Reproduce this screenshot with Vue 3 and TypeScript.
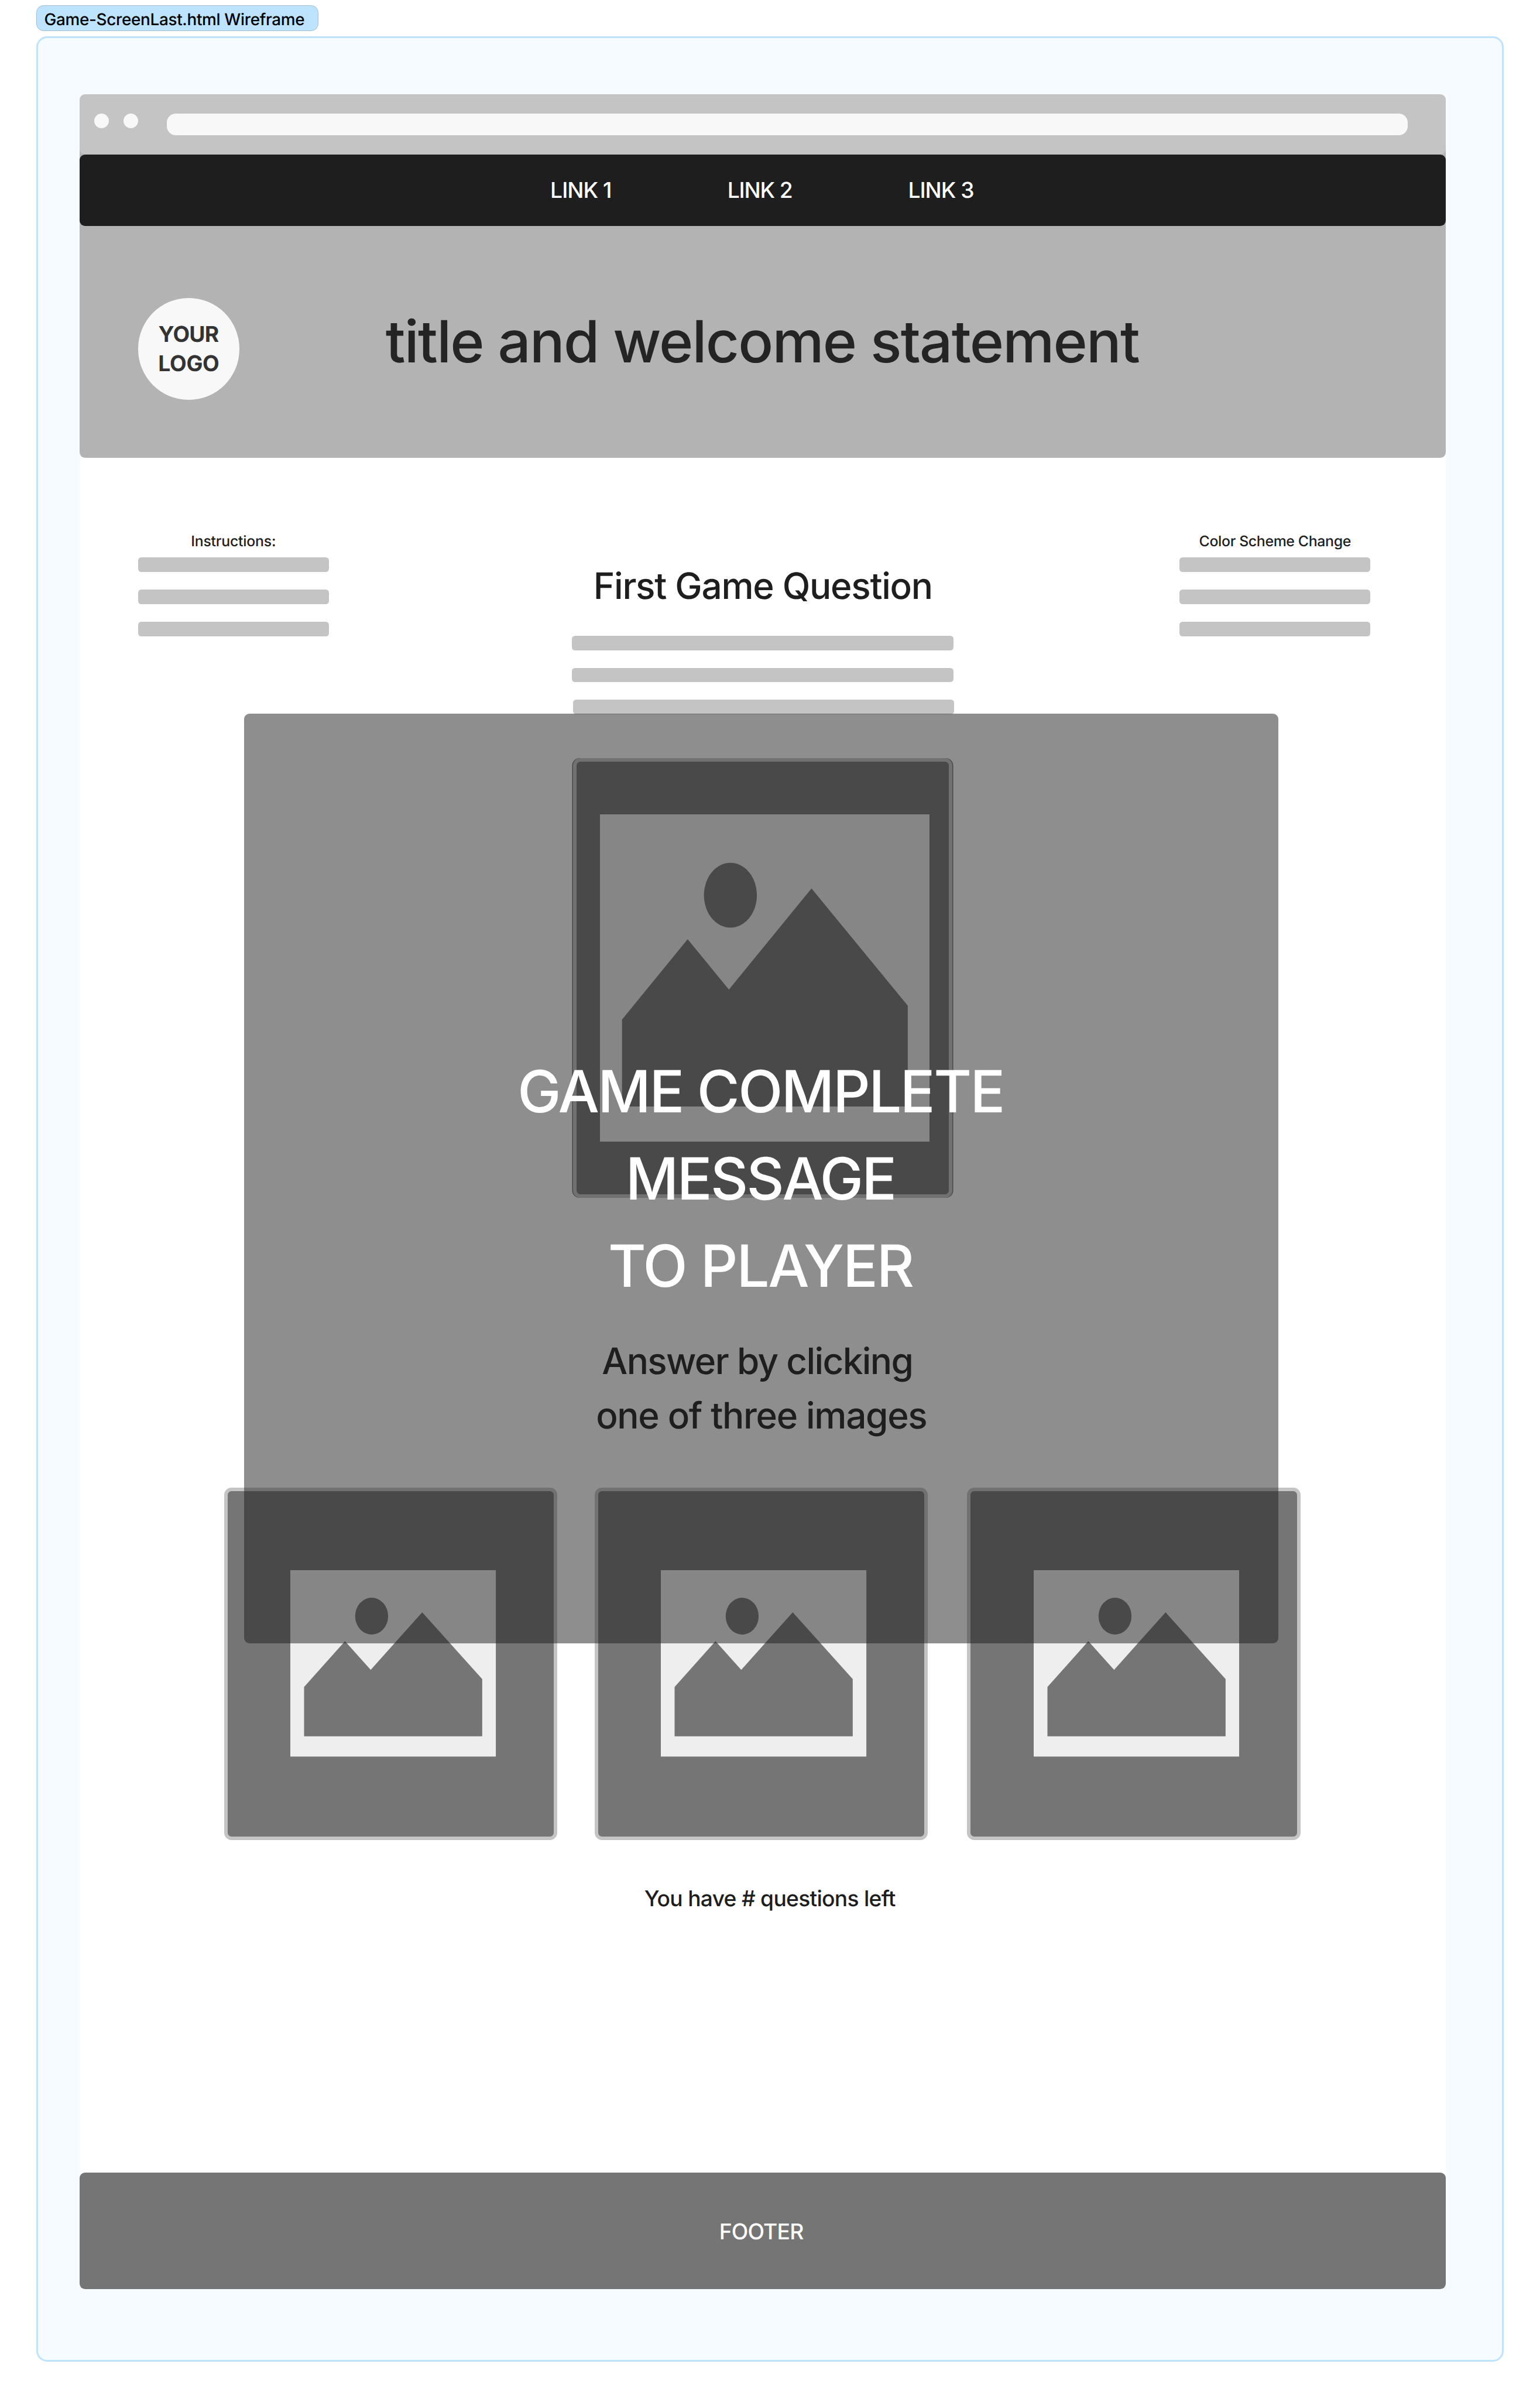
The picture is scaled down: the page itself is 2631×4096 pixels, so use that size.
<script setup lang="ts">
interface TextLine {
  text: string
  // distance from the left edge of the block, and tracking, both in rem
  left: number
  track: number
}

const links: TextLine[] = [
  { text: 'LINK 1', left: 10.36, track: -0.0125 },
  { text: 'LINK 2', left: 14.26, track: -0.0145 },
  { text: 'LINK 3', left: 18.24, track: -0.0126 },
]

const logo: TextLine[] = [
  { text: 'YOUR', left: 0.45, track: -0.01 },
  { text: 'LOGO', left: 0.445, track: -0.003 },
]

const message: TextLine[] = [
  { text: 'GAME COMPLETE', left: 6.02, track: -0.032 },
  { text: 'MESSAGE', left: 8.4, track: -0.034 },
  { text: 'TO PLAYER', left: 8.015, track: -0.028 },
]

const prompt: TextLine[] = [
  { text: 'Answer by clicking', left: 11.497, track: -0.0212 },
  { text: 'one of three images', left: 11.367, track: -0.0171 },
]

const choices = ['first', 'second', 'third']

const place = (line: TextLine) => ({
  marginLeft: `${line.left}rem`,
  letterSpacing: `${line.track}rem`,
})
</script>

<template>
  <div class="board">
    <div class="section-label">Game-ScreenLast.html Wireframe</div>

    <div class="section">
      <div class="page">
        <header class="top">
          <div class="browser">
            <span class="dot"></span>
            <span class="dot"></span>
            <span class="url"></span>
          </div>
          <nav class="nav">
            <a v-for="l in links" :key="l.text" class="link" :style="place(l)">{{ l.text }}</a>
          </nav>
          <div class="hero">
            <div class="logo">
              <span v-for="l in logo" :key="l.text" :style="place(l)">{{ l.text }}</span>
            </div>
            <h1 class="title">title and welcome statement</h1>
          </div>
        </header>

        <main class="main">
          <div class="intro">
            <aside class="side">
              <p class="caption instructions">Instructions:</p>
              <div class="bars"><i></i><i></i><i></i></div>
            </aside>
            <section class="question">
              <h2>First Game Question</h2>
              <div class="bars"><i></i><i></i><i></i></div>
            </section>
            <aside class="side">
              <p class="caption scheme">Color Scheme Change</p>
              <div class="bars"><i></i><i></i><i></i></div>
            </aside>
          </div>

          <div class="card card-large">
            <svg class="picture" viewBox="0 0 726 721.5" preserveAspectRatio="none">
              <rect width="726" height="721.5" fill="#eeeeee" />
              <ellipse cx="287.3" cy="178" rx="58.3" ry="71.3" fill="#757575" />
              <path d="M48.6 643.2V451.9L193.1 274.9L284 385.8L465.9 163.1L677.9 421.3V643.2Z" fill="#757575" />
            </svg>
          </div>

          <p class="prompt">
            <span v-for="l in prompt" :key="l.text" :style="place(l)">{{ l.text }}</span>
          </p>

          <div class="choices">
            <div v-for="c in choices" :key="c" class="card card-small" :class="c">
              <svg class="picture" viewBox="0 0 726 721.5" preserveAspectRatio="none">
                <rect width="726" height="721.5" fill="#eeeeee" />
                <ellipse cx="287.3" cy="178" rx="58.3" ry="71.3" fill="#757575" />
                <path d="M48.6 643.2V451.9L193.1 274.9L284 385.8L465.9 163.1L677.9 421.3V643.2Z" fill="#757575" />
              </svg>
            </div>
          </div>

          <p class="status">You have # questions left</p>

          <div class="overlay">
            <p class="message">
              <span v-for="l in message" :key="l.text" :style="place(l)">{{ l.text }}</span>
            </p>
          </div>
        </main>

        <footer class="footer"><span>FOOTER</span></footer>
      </div>
    </div>
  </div>
</template>

<style>
html {
  font-size: calc(100vh / 52.8);
  background: #fff;
}
body {
  margin: 0;
  overflow: hidden;
}
</style>

<style scoped>
.board,
.board * {
  box-sizing: border-box;
}
.board {
  width: 33.92rem;
  height: 52.8rem;
  padding: 0.12rem 0.8rem 0;
  background: #fff;
  font-family: Inter, sans-serif;
  font-weight: 500;
  color: #1e1e1e;
  white-space: nowrap;
  text-rendering: geometricPrecision;
}
p,
h1,
h2 {
  margin: 0;
  font-weight: 500;
}
.section-label {
  width: 6.21rem;
  height: 0.56rem;
  padding: 0.045rem 0 0 0.16rem;
  border: 0.02rem solid #9dbfda;
  border-radius: 0.16rem;
  background: #bde3ff;
  color: #000;
  font-size: 0.36rem;
  line-height: 0.5rem;
  letter-spacing: -0.0043rem;
}
.section {
  width: 32.32rem;
  height: 51.2rem;
  margin-top: 0.12rem;
  padding: 1.24rem 0 0 0.92rem;
  border: 0.04rem solid #bde3ff;
  border-radius: 0.24rem;
  background: #f5fbff;
}
.page {
  width: 30.08rem;
  background: linear-gradient(#fff, #fff) no-repeat 0 5rem / 100% 42rem;
}
.top {
  background: linear-gradient(#b3b3b3, #b3b3b3) no-repeat 0 100% / 100% 7.4rem;
  border-radius: 0 0 0.12rem 0.12rem;
}
.browser {
  display: flex;
  align-items: flex-start;
  height: 1.32rem;
  padding: 0.42rem 0 0 0.32rem;
  border-radius: 0.12rem;
  background: #c4c4c4;
}
.dot {
  width: 0.32rem;
  height: 0.32rem;
  margin-right: 0.32rem;
  border-radius: 50%;
  background: #f8f8f8;
}
.url {
  width: 27.32rem;
  height: 0.48rem;
  margin-left: 0.32rem;
  border-radius: 0.2rem;
  background: #f8f8f8;
}
.nav {
  display: grid;
  height: 1.577rem;
  border-radius: 0.12rem;
  background: #1e1e1e;
  color: #fff;
  font-size: 0.48rem;
  line-height: 1.577rem;
}
.link {
  grid-area: 1 / 1;
  justify-self: start;
}
.hero {
  display: flex;
  align-items: flex-start;
  height: 5.103rem;
  padding: 1.583rem 0 0 1.28rem;
}
.logo {
  display: flex;
  flex-direction: column;
  width: 2.24rem;
  height: 2.24rem;
  padding-top: 0.485rem;
  border-radius: 50%;
  background: #f8f8f8;
  color: #333;
  font-size: 0.48rem;
  font-weight: 700;
  line-height: 0.64rem;
}
.title {
  margin-left: 3.215rem;
  color: #242424;
  font-size: 1.28rem;
  line-height: 1.92rem;
  letter-spacing: -0.0233rem;
}
.main {
  position: relative;
  height: 37.76rem;
}
.intro {
  display: flex;
  height: 6.62rem;
  padding-left: 1.28rem;
}
.side {
  width: 4.2rem;
  padding-top: 1.595rem;
}
.caption {
  height: 0.605rem;
  font-size: 0.32rem;
  line-height: 0.48rem;
}
.instructions {
  margin-left: 1.167rem;
  letter-spacing: -0.0028rem;
}
.scheme {
  margin-left: 0.43rem;
  letter-spacing: -0.0044rem;
}
.bars {
  display: flex;
  flex-direction: column;
  gap: 0.3867rem;
}
.bars i {
  height: 0.32rem;
  border-radius: 0.07rem;
  background: #c4c4c4;
}
.question {
  width: 8.4rem;
  margin: 0 4.98rem 0 5.36rem;
  padding-top: 2.22rem;
}
.question h2 {
  height: 1.7rem;
  padding-left: 0.47rem;
  font-size: 0.8rem;
  line-height: 1.2rem;
  letter-spacing: -0.0165rem;
}
.question .bars i:last-child {
  margin: 0 -0.02rem 0 0.02rem;
}
.card {
  border: 0.08rem solid #c4c4c4;
  border-radius: 0.16rem;
  background: #757575;
}
.card-large {
  width: 8.36rem;
  height: 9.68rem;
  margin-left: 10.86rem;
  padding: 1.15rem 0 0 0.52rem;
  box-shadow: -0.02rem 0 0 #757575, 0.02rem 0 0 #757575;
}
.picture {
  display: block;
}
.card-large .picture {
  width: 7.26rem;
  height: 7.215rem;
}
.prompt {
  display: flex;
  flex-direction: column;
  height: 3.4rem;
  margin-top: 2.98rem;
  padding-top: 0.01rem;
  font-size: 0.8rem;
  line-height: 1.2rem;
}
.choices {
  display: flex;
  padding-left: 3.18rem;
}
.card-small {
  width: 7.34rem;
  height: 7.76rem;
  padding: 1.743rem 0 0 1.384rem;
}
.second {
  margin: 0 0.86rem 0 0.82rem;
}
.card-small .picture {
  width: 4.526rem;
  height: 4.104rem;
}
.status {
  margin: 0.97rem 0 0 12.43rem;
  font-size: 0.48rem;
  line-height: 0.64rem;
  letter-spacing: -0.0095rem;
}
.overlay {
  position: absolute;
  z-index: 1;
  left: 3.62rem;
  top: 5.64rem;
  width: 22.78rem;
  height: 20.46rem;
  padding-top: 7.36rem;
  border-radius: 0.12rem;
  background: rgba(30, 30, 30, 0.5);
}
.message {
  display: flex;
  flex-direction: column;
  color: #fff;
  font-size: 1.28rem;
  line-height: 1.92rem;
}
.footer {
  height: 2.56rem;
  padding: 0.02rem 0 0 14.08rem;
  border-radius: 0.12rem;
  background: #757575;
  color: #fff;
  font-size: 0.48rem;
  line-height: 2.56rem;
  letter-spacing: -0.0104rem;
}
</style>
